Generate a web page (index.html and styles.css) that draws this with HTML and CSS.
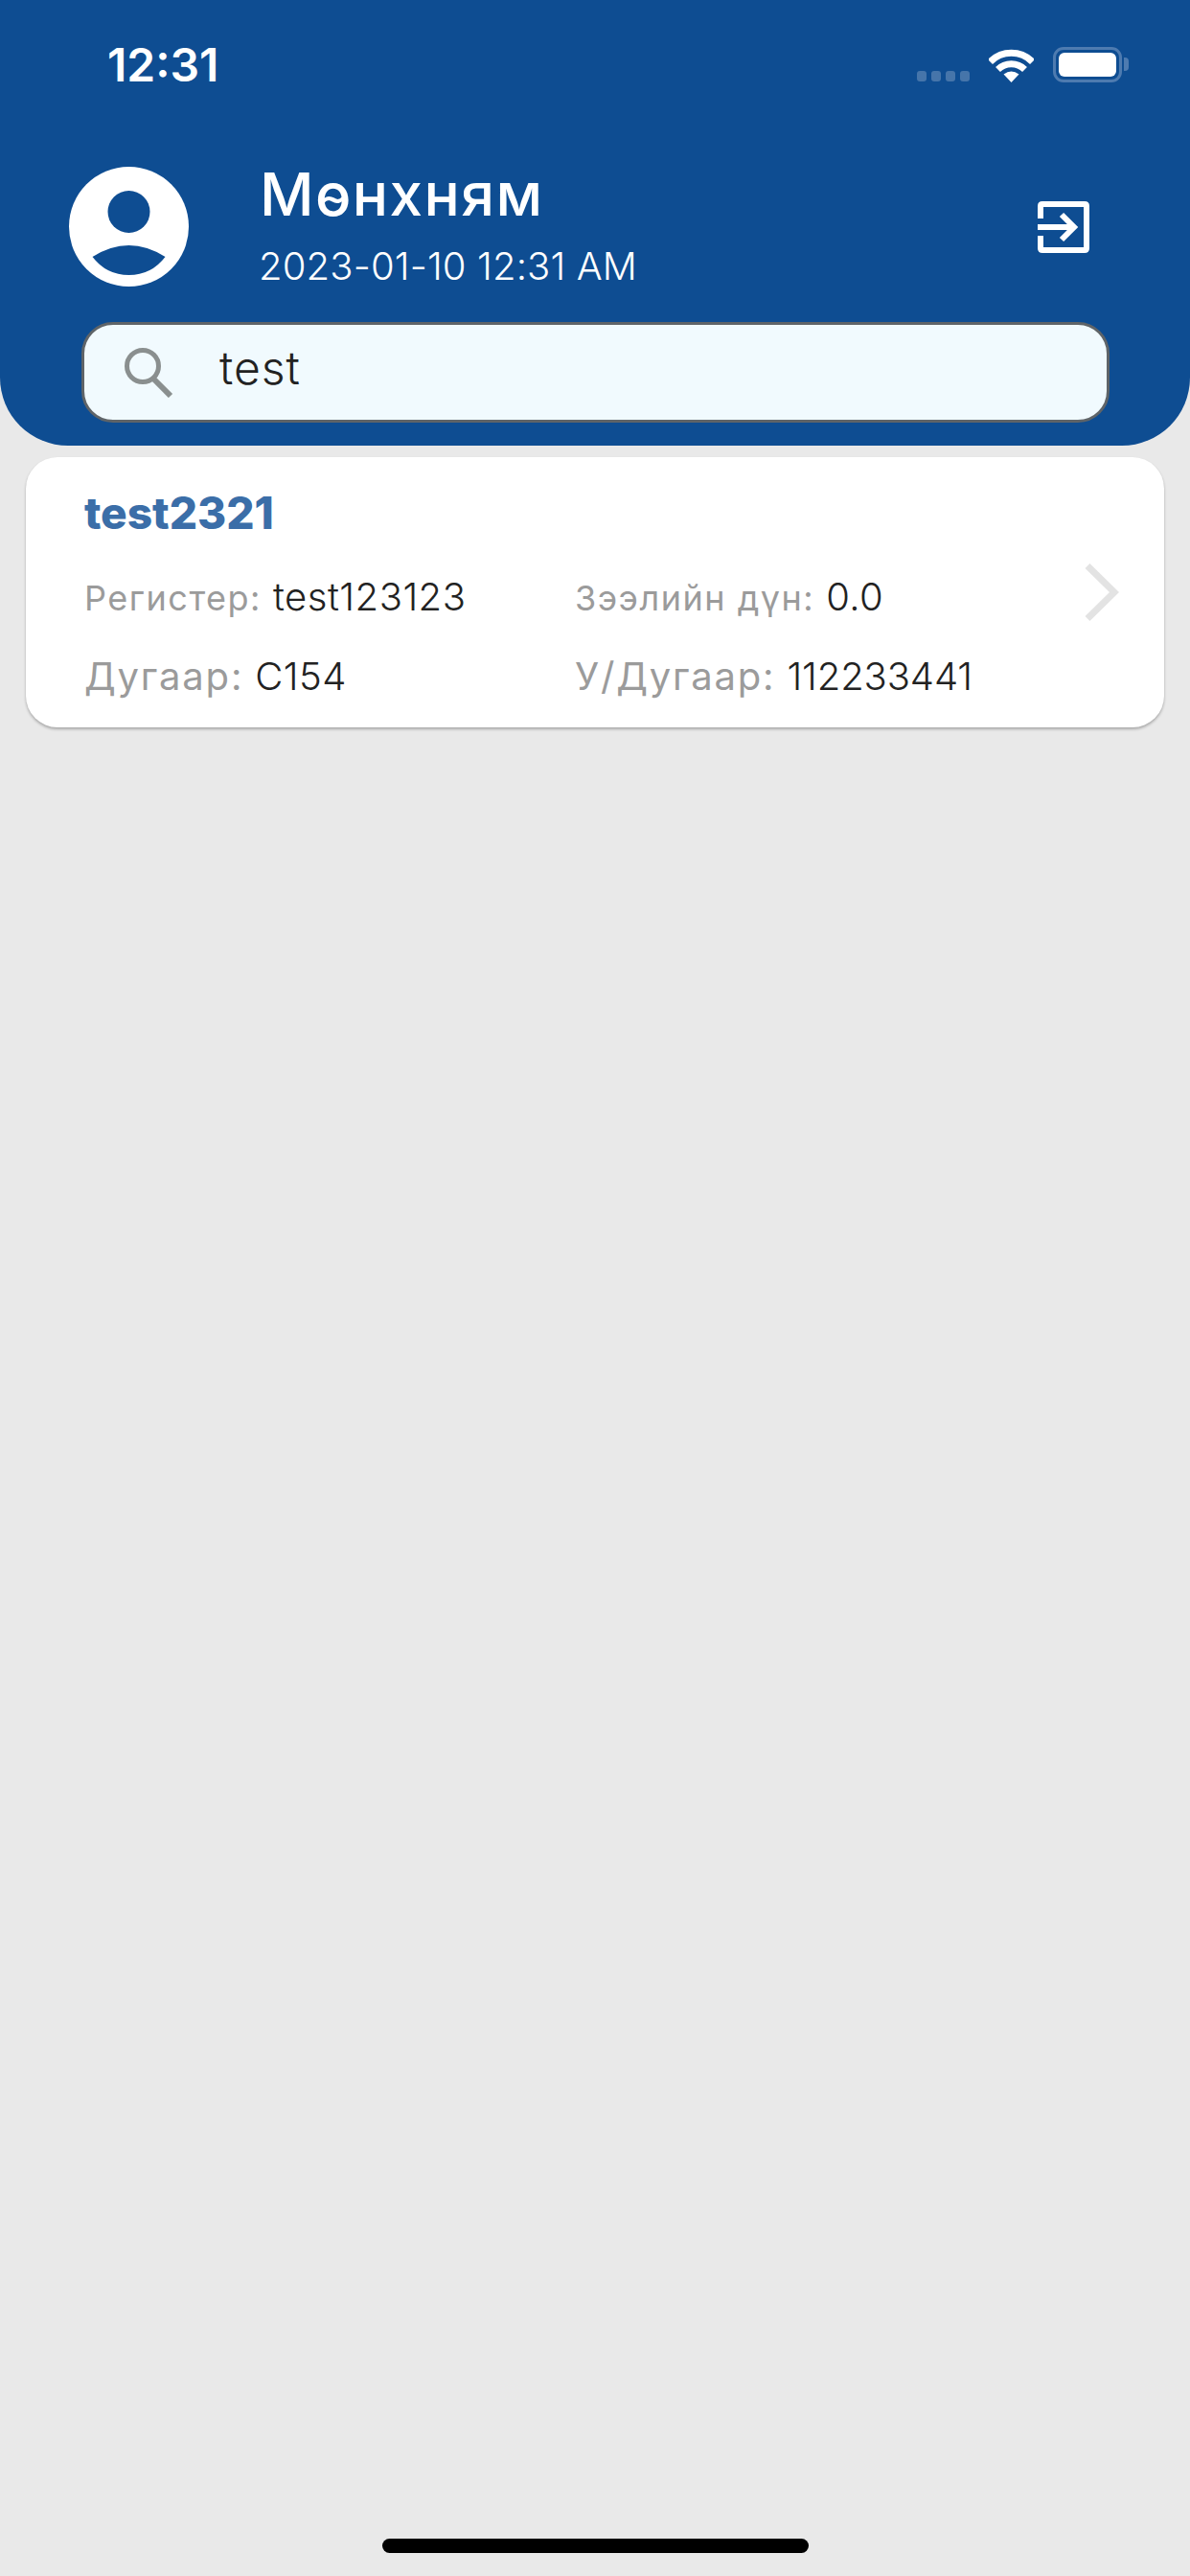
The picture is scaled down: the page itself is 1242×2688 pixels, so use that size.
FILE: index.html
```html
<!DOCTYPE html>
<html lang="mn">
<head>
<meta charset="utf-8">
<title>Зээлийн жагсаалт</title>
<link rel="stylesheet" href="styles.css">
</head>
<body>
<div class="screen">
  <header class="header">
    <div class="status">
      <span class="clock">12:31</span>
      <div class="status-icons">
        <div class="signal"><i></i><i></i><i></i><i></i></div>
        <svg class="wifi" viewBox="0 0 47 36" width="47" height="36">
          <path d="M1.5 14.5A31 31 0 0 1 45.5 14.5" fill="none" stroke="#fff" stroke-width="7"/>
          <path d="M9.5 22.5A20 20 0 0 1 37.5 22.5" fill="none" stroke="#fff" stroke-width="7"/>
          <path d="M23.5 36L15.5 27.5Q23.5 21.5 31.5 27.5Z" fill="#fff"/>
        </svg>
        <div class="battery"><div class="battery-level"></div></div>
        <div class="battery-cap"></div>
      </div>
    </div>
    <div class="profile">
      <svg class="avatar" viewBox="0 0 125 125" width="125" height="125">
        <circle cx="62.5" cy="62.5" r="62.5" fill="#fff"/>
        <circle cx="62.5" cy="47" r="22" fill="#0e4d92"/>
        <path d="M24.5 94Q62.5 70 100.5 94Q86 113 62.5 113Q39 113 24.5 94Z" fill="#0e4d92"/>
      </svg>
      <div class="who">
        <div class="name">Мөнхням</div>
        <div class="stamp">2023-01-10 12:31 AM</div>
      </div>
      <svg class="logout" viewBox="0 0 54 54" width="54" height="54">
        <path d="M3 18V5Q3 3 5 3H49Q51 3 51 5V49Q51 51 49 51H5Q3 51 3 49V36" fill="none" stroke="#fff" stroke-width="6"/>
        <path d="M0 27H38" fill="none" stroke="#fff" stroke-width="6"/>
        <path d="M25 14L38 27L25 40" fill="none" stroke="#fff" stroke-width="6"/>
      </svg>
    </div>
    <div class="search">
      <svg class="search-icon" viewBox="0 0 52 52" width="52" height="52">
        <circle cx="19" cy="19" r="16.5" fill="none" stroke="#8a8f8f" stroke-width="5"/>
        <path d="M30 32L48 50" fill="none" stroke="#8a8f8f" stroke-width="6"/>
      </svg>
      <span class="query">test</span>
    </div>
  </header>

  <main class="list">
    <article class="card">
      <h2 class="card-title">test2321</h2>
      <div class="fields">
        <div class="field"><span class="label small">Регистер:</span><span class="value">test123123</span></div>
        <div class="field"><span class="label small">Зээлийн дүн:</span><span class="value">0.0</span></div>
        <div class="field"><span class="label">Дугаар:</span><span class="value">C154</span></div>
        <div class="field"><span class="label">У/Дугаар:</span><span class="value digits">112233441</span></div>
      </div>
      <svg class="chevron" viewBox="0 0 36 60" width="36" height="60">
        <path d="M3 2.5L31 30L3 57.5" fill="none" stroke="#e3e3e3" stroke-width="7"/>
      </svg>
    </article>
  </main>

  <div class="home-bar"></div>
</div>
</body>
</html>
```

FILE: styles.css
```css
* {
  box-sizing: border-box;
}

html,
body {
  margin: 0;
  padding: 0;
}

body {
  background: #e9e9e9;
  font-family: Inter, "Noto Sans", sans-serif;
}

.screen {
  display: flex;
  flex-direction: column;
  width: 1242px;
  height: 2688px;
}

/* Blue header block */
.header {
  height: 465px;
  flex: none;
  padding-top: 49px;
  background: #0e4d92;
  border-radius: 0 0 71px 71px;
}

.status {
  display: flex;
  justify-content: space-between;
  align-items: center;
  height: 37px;
  padding: 0 64px 0 112px;
}

.clock {
  color: #fff;
  font-size: 48px;
  font-weight: 600;
  line-height: 37px;
}

.status-icons {
  display: flex;
  align-items: flex-end;
}

.signal {
  display: flex;
  gap: 5px;
  margin-right: 20px;
  margin-bottom: 1px;
}

.signal i {
  width: 10px;
  height: 11px;
  background: #4675aa;
  border-radius: 3px;
}

.wifi {
  display: block;
  margin-right: 20px;
}

.battery {
  width: 72px;
  height: 37px;
  padding: 3px;
  border: 3px solid #4e7bb0;
  border-radius: 11px;
}

.battery-level {
  height: 100%;
  background: #fff;
  border-radius: 6px;
}

.battery-cap {
  width: 5px;
  height: 14px;
  margin: 0 0 12px 2px;
  background: #4e7bb0;
  border-radius: 0 4px 4px 0;
}

/* Avatar, name and logout */
.profile {
  display: flex;
  align-items: center;
  height: 125px;
  margin-top: 88px;
  padding: 0 105px 0 72px;
}

.avatar {
  display: block;
  flex: none;
}

.who {
  flex: 1;
  padding: 0 0 3px 73px;
}

.name {
  margin-left: 1px;
  color: #fff;
  font-size: 62px;
  font-weight: 500;
  line-height: 70px;
  letter-spacing: 1.4px;
}

.stamp {
  margin-top: 16px;
  color: #fff;
  font-size: 40px;
  font-weight: 300;
  line-height: 48px;
  letter-spacing: 0.15px;
}

.logout {
  display: block;
  flex: none;
}

/* Search field */
.search {
  display: flex;
  align-items: center;
  width: 1073px;
  height: 105px;
  margin: 37px 0 0 85px;
  padding-left: 42px;
  background: #f1fafe;
  border: 3px solid #5f6468;
  border-radius: 33px;
}

.search-icon {
  display: block;
  flex: none;
}

.query {
  margin: 0 0 10px 47px;
  color: #222;
  font-size: 48px;
  font-weight: 300;
  letter-spacing: 1px;
}

/* Result list */
.list {
  flex: 1;
  padding: 12px 27px 0;
}

.card {
  position: relative;
  height: 282px;
  padding: 32px 0 0 61px;
  background: #fff;
  border-radius: 33px;
  box-shadow: 0 2px 3px rgba(0, 0, 0, 0.28);
}

.card-title {
  margin: 0;
  color: #3b6ea8;
  font-size: 46px;
  font-weight: 800;
  line-height: 52px;
}

.fields {
  display: grid;
  grid-template-columns: 512px 1fr;
  grid-auto-rows: 83px;
  margin-top: 38px;
}

.field {
  display: flex;
  align-items: baseline;
  gap: 12px;
  line-height: 48px;
  white-space: nowrap;
}

.label {
  color: #9b9b9b;
  font-size: 40px;
  letter-spacing: 1.8px;
}

.label.small {
  font-size: 36px;
  letter-spacing: 1.5px;
}

.value {
  color: #222;
  font-size: 40px;
  font-weight: 300;
  letter-spacing: 0.5px;
}

.value.digits {
  letter-spacing: -0.1px;
}

.chevron {
  position: absolute;
  top: 111px;
  right: 47px;
}

/* iOS home indicator */
.home-bar {
  flex: none;
  width: 445px;
  height: 15px;
  margin: 0 auto 24px;
  background: #000;
  border-radius: 8px;
}
```
